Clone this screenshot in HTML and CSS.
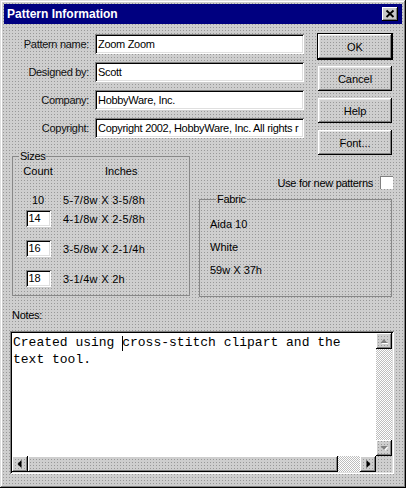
FILE: index.html
```html
<!DOCTYPE html>
<html>

<head>
    <title>Pattern Information</title>
    <link rel="stylesheet" href="styles.css">
</head>

<body>
    <div class="window">
        <div class="titlebar">
            <span class="title">Pattern Information</span>
            <span class="close-btn">
                <svg width="16" height="14" viewBox="0 0 16 14">
                    <path d="M4.5 3.5l7 6.5M11.5 3.5l-7 6.5" stroke="#000" stroke-width="1.8" fill="none" />
                </svg>
            </span>
        </div>

        <div class="content">
            <div class="top-row">
                <div class="fields">
                    <label>Pattern name:</label>
                    <div class="field">Zoom Zoom</div>
                    <label>Designed by:</label>
                    <div class="field">Scott</div>
                    <label>Company:</label>
                    <div class="field">HobbyWare, Inc.</div>
                    <label>Copyright:</label>
                    <div class="field">Copyright 2002, HobbyWare, Inc. All rights r</div>
                </div>

                <div class="buttons">
                    <div class="btn default">OK</div>
                    <div class="btn">Cancel</div>
                    <div class="btn">Help</div>
                    <div class="btn">Font...</div>
                </div>
            </div>

            <div class="middle-row">
                <fieldset class="group sizes">
                    <legend>Sizes</legend>
                    <div class="size-grid">
                        <div class="size-row size-head">
                            <span class="count">Count</span>
                            <span class="inches-head">Inches</span>
                        </div>
                        <div class="size-row row-first">
                            <span class="count">10</span>
                            <span class="inches">5-7/8w X 3-5/8h</span>
                        </div>
                        <div class="size-row row-second">
                            <span class="count"><span class="count-box">14</span></span>
                            <span class="inches">4-1/8w X 2-5/8h</span>
                        </div>
                        <div class="size-row row-next">
                            <span class="count"><span class="count-box">16</span></span>
                            <span class="inches">3-5/8w X 2-1/4h</span>
                        </div>
                        <div class="size-row row-next">
                            <span class="count"><span class="count-box">18</span></span>
                            <span class="inches">3-1/4w X 2h</span>
                        </div>
                    </div>
                </fieldset>

                <div class="right-col">
                    <div class="check-row">
                        <span>Use for new patterns</span>
                        <span class="checkbox"></span>
                    </div>
                    <fieldset class="group fabric">
                        <legend>Fabric</legend>
                        <div>Aida 10</div>
                        <div>White</div>
                        <div>59w X 37h</div>
                    </fieldset>
                </div>
            </div>

            <div class="notes-label">Notes:</div>
            <div class="notes-box">
                <div class="notes-text">Created using cross-stitch clipart and the
text tool.</div>

                <div class="vscroll">
                    <div class="sbtn">
                        <svg width="16" height="16" viewBox="0 0 16 16">
                            <path d="M8 6l3.5 4h-7z" fill="#fff" transform="translate(1 1)" />
                            <path d="M8 6l3.5 4h-7z" fill="#808080" />
                        </svg>
                    </div>
                    <div class="track"></div>
                    <div class="sbtn">
                        <svg width="16" height="16" viewBox="0 0 16 16">
                            <path d="M8 10l3.5-4h-7z" fill="#fff" transform="translate(1 1)" />
                            <path d="M8 10l3.5-4h-7z" fill="#808080" />
                        </svg>
                    </div>
                </div>

                <div class="hscroll">
                    <div class="sbtn">
                        <svg width="16" height="16" viewBox="0 0 16 16">
                            <path d="M9.5 4v8L5.5 8z" fill="#000" />
                        </svg>
                    </div>
                    <div class="thumb"></div>
                    <div class="track"></div>
                    <div class="sbtn">
                        <svg width="16" height="16" viewBox="0 0 16 16">
                            <path d="M6.5 4v8l4-4z" fill="#000" />
                        </svg>
                    </div>
                </div>

                <div class="corner"></div>
            </div>
        </div>
    </div>
</body>

</html>
```

FILE: styles.css
```css
body {
    margin: 0;
    font-family: "Liberation Sans", Arial, sans-serif;
    font-size: 11px;
    color: #000;
}

.window {
    width: 406px;
    height: 488px;
    box-sizing: border-box;
    overflow: hidden;
    background-color: #cecece;
    background-image: conic-gradient(from 270deg at 1px 1px, #989898 25%, transparent 0);
    background-size: 3px 3px;
    box-shadow: inset -1px -1px #000, inset 1px 1px #dfdfdf, inset -2px -2px #808080, inset 2px 2px #fff;
}

.titlebar {
    margin: 4px 4px 0;
    height: 20px;
    padding: 0 4px 0 3px;
    display: flex;
    align-items: center;
    justify-content: space-between;
    background: #000080;
    color: #fff;
    font-weight: bold;
    font-size: 12px;
}

.close-btn {
    width: 16px;
    height: 14px;
    display: flex;
    background: #c8c8c8;
    box-shadow: inset -1px -1px #000, inset 1px 1px #fff, inset -2px -2px #808080;
}

.content {
    padding: 10px 14px 14px 12px;
}

/* top: text fields + buttons */
.top-row {
    display: flex;
    gap: 14px;
    align-items: flex-start;
}

.fields {
    display: grid;
    grid-template-columns: 77px 209px;
    column-gap: 6px;
    row-gap: 8px;
    align-items: center;
}

.fields label {
    text-align: right;
    letter-spacing: -0.3px;
    color: #111;
}

.field {
    height: 20px;
    box-sizing: border-box;
    padding: 0 3px;
    line-height: 20px;
    letter-spacing: -0.3px;
    white-space: nowrap;
    overflow: hidden;
    background: #fff;
    box-shadow: inset 1px 1px #808080, inset -1px -1px #fff, inset 2px 2px #000, inset -2px -2px #dfdfdf;
}

.buttons {
    width: 74px;
    display: flex;
    flex-direction: column;
    gap: 7px;
}

.btn {
    height: 25px;
    display: flex;
    align-items: center;
    justify-content: center;
    box-shadow: inset -1px -1px #000, inset 1px 1px #fff, inset -2px -2px #808080, inset 2px 2px #e4e4e4;
}

.btn.default {
    outline: 1px solid #000;
}

/* middle: sizes + fabric */
.middle-row {
    margin-top: -5px;
    display: flex;
    gap: 9px;
    align-items: flex-start;
}

.group {
    margin: 0;
    min-inline-size: 0;
    border: 1px solid #888;
    padding: 1px 0 8px;
}

.group legend {
    margin-left: 6px;
    padding: 0 1px;
    line-height: 13px;
    letter-spacing: -0.3px;
}

.sizes {
    width: 178px;
    box-sizing: border-box;
}

.size-grid {
    padding-left: 12px;
}

.size-row {
    height: 17px;
    display: grid;
    grid-template-columns: 26px 1fr;
    column-gap: 12px;
    align-items: center;
}

.size-head {
    height: 14px;
}

.row-first {
    margin-top: 13px;
}

.row-second {
    margin-top: 2px;
}

.row-next {
    margin-top: 13px;
}

.count {
    display: flex;
    justify-content: center;
}

.count-box {
    width: 25px;
    height: 17px;
    box-sizing: border-box;
    padding-left: 3px;
    line-height: 17px;
    background: #fff;
    box-shadow: inset 1px 1px #808080, inset -1px -1px #fff, inset 2px 2px #000, inset -2px -2px #dfdfdf;
}

.inches {
    letter-spacing: 0.3px;
}

.inches-head {
    padding-left: 42px;
}

.right-col {
    flex: 1;
    display: flex;
    flex-direction: column;
}

.check-row {
    margin-top: 26px;
    margin-right: -1px;
    height: 13px;
    display: flex;
    justify-content: flex-end;
    align-items: center;
    gap: 7px;
    letter-spacing: -0.3px;
}

.checkbox {
    width: 13px;
    height: 13px;
    box-sizing: border-box;
    background: #fff;
    box-shadow: inset 1px 1px #808080, inset -1px -1px #fff;
}

.fabric {
    margin-top: 4px;
    padding: 7px 0 14px 10px;
    line-height: 23px;
}

/* notes */
.notes-label {
    margin-top: 12px;
    line-height: 13px;
    letter-spacing: -0.3px;
}

.notes-box {
    margin: 9px -2px 0;
    height: 143px;
    box-sizing: border-box;
    padding: 2px;
    display: grid;
    grid-template-columns: 1fr 16px;
    grid-template-rows: 1fr 16px;
    box-shadow: inset 1px 1px #808080, inset -1px -1px #fff, inset 2px 2px #000, inset -2px -2px #dfdfdf;
}

/* the text cursor is a 1px line drawn just before "cross" */
.notes-text {
    background: linear-gradient(#000, #000) no-repeat 110px 3px / 1px 15px, #fff;
    padding: 1px;
    font-family: "Liberation Mono", "Courier New", monospace;
    font-size: 13px;
    line-height: 17px;
    white-space: pre;
    overflow: hidden;
}

.vscroll {
    display: flex;
    flex-direction: column;
}

.hscroll {
    display: flex;
}

.track {
    flex: 1;
    background: conic-gradient(#fff 25%, #bdbdbd 0 50%, #fff 0 75%, #bdbdbd 0);
    background-size: 2px 2px;
}

.sbtn {
    width: 16px;
    height: 16px;
    display: flex;
    box-shadow: inset -1px -1px #000, inset 1px 1px #fff, inset -2px -2px #808080;
}

.thumb {
    width: 310px;
    box-shadow: inset -1px -1px #000, inset 1px 1px #fff, inset -2px -2px #808080;
}
```
